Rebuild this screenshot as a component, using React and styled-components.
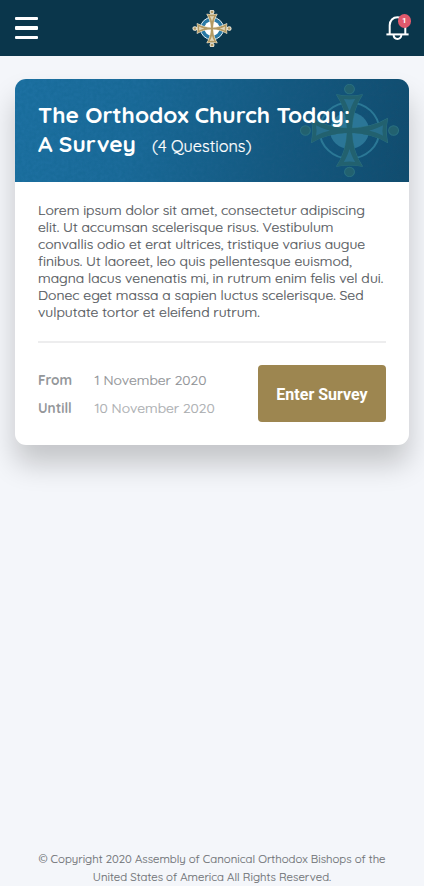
import React from "react";
import styled, { createGlobalStyle } from "styled-components";

const GlobalStyle = createGlobalStyle`
  * { box-sizing: border-box; }
  body {
    margin: 0;
    background: #f4f6fa;
    font-family: Quicksand, Lato, sans-serif;
  }
`;

const Page = styled.div`
  min-height: 886px;
  display: flex;
  flex-direction: column;
`;

const NavBar = styled.header`
  height: 56px;
  padding: 0 15px;
  background: #0a364b;
  display: grid;
  grid-template-columns: 1fr auto 1fr;
  align-items: center;
`;

const MenuButton = styled.button`
  width: 23px;
  padding: 0;
  border: 0;
  background: none;
  display: flex;
  flex-direction: column;
  gap: 6px;
`;

const MenuBar = styled.span`
  height: 3.6px;
  border-radius: 1px;
  background: #fff;
`;

const BellButton = styled.button`
  position: relative;
  justify-self: end;
  width: 23px;
  height: 24px;
  padding: 0;
  border: 0;
  background: none;
  svg { display: block; }
`;

const Badge = styled.span`
  position: absolute;
  top: -2px;
  right: -2px;
  width: 13.5px;
  height: 13.5px;
  border-radius: 50%;
  background: #e0596c;
  color: #fff;
  font: 700 8px/13px Roboto, sans-serif;
  text-align: center;
`;

const Card = styled.main`
  margin: 23px 15px 0;
  height: 366px;
  border-radius: 11px;
  background: #fff;
  box-shadow: 0 19px 29px rgba(0, 0, 0, 0.2);
`;

const CardHeader = styled.div`
  position: relative;
  height: 102.5px;
  padding: 22px 23px 0;
  border-radius: 11px 11px 0 0;
  background: linear-gradient(100deg, #1d71a2 0%, #1b6b9a 30%, #165a82 65%, #124c6e 100%);
  overflow: hidden;
`;

const Texture = styled.svg`
  position: absolute;
  inset: 0;
  width: 100%;
  height: 100%;
  opacity: 0.13;
`;

const Watermark = styled.div`
  position: absolute;
  top: 4.7px;
  right: 8.5px;
  svg { display: block; }
`;

const Title = styled.h1`
  position: relative;
  margin: 0;
  color: #fff;
  font-size: 22.7px;
  font-weight: 700;
  line-height: 28.6px;
  white-space: nowrap;
`;

const Count = styled.span`
  margin-left: 16px;
  font-size: 16.25px;
  font-weight: 400;
  line-height: 1;
  -webkit-text-stroke: 0.2px currentColor;
`;

const Line = styled.span`
  display: block;
  white-space: nowrap;
`;

const CardBody = styled.div`
  padding: 19.3px 23px 0;
`;

const Description = styled.p`
  margin: 0;
  height: 117.8px;
  color: #54585d;
  font-size: 13.9px;
  font-weight: 400;
  line-height: 17.1px;
  -webkit-text-stroke: 0.2px currentColor;
`;

const CardFooter = styled.div`
  margin-top: 22.2px;
  padding-top: 22.2px;
  border-top: 2px solid #ededee;
  display: flex;
  justify-content: space-between;
`;

const Dates = styled.dl`
  margin: 0;
  padding-top: 1px;
  display: grid;
  grid-template-columns: 56.5px auto;
  align-content: start;
  font-size: 13.83px;
  line-height: 28.5px;
`;

const DateLabel = styled.dt`
  color: #94979a;
  font-size: 13.6px;
  font-weight: 700;
`;

const DateValue = styled.dd`
  margin: 0;
  color: ${({ $faded }) => ($faded ? "#aaadb0" : "#8f9296")};
  -webkit-text-stroke: 0.2px currentColor;
`;

const EnterButton = styled.button`
  width: 128px;
  height: 57px;
  padding: 2px 0 0;
  border: 0;
  border-radius: 4px;
  background: #9d8650;
  color: #fff;
  font: 700 16px/55px Roboto, sans-serif;
`;

const Copyright = styled.footer`
  margin-top: auto;
  color: #707377;
  font-size: 11.4px;
  font-weight: 400;
  line-height: 18.2px;
  text-align: center;
  -webkit-text-stroke: 0.15px currentColor;
`;

const ARM =
  "M-2.2 0 C-2.6 -14 -6 -27 -12.5 -37 Q0 -34.5 12.5 -37 C6 -27 2.6 -14 2.2 0 Z";
const ARM_INSET = "M0 -19 C-1 -23 -3 -28 -5.5 -32.5 Q0 -31.5 5.5 -32.5 C3 -28 1 -23 0 -19 Z";
const ANGLES = [0, 90, 180, 270];

function Cross({ width, height, arm, outline, outlineWidth, ring, ringWidth, band, disc, inset }) {
  return (
    <svg width={width} height={height} viewBox="-50 -48 100 96" preserveAspectRatio="none">
      <circle r="29" fill={band} stroke={ring} strokeWidth={ringWidth} />
      <circle r="19" fill={disc} />
      {ANGLES.map((angle) => (
        <g key={angle} transform={`rotate(${angle})`} stroke={outline} strokeWidth={outlineWidth}>
          <circle cy="-42.8" r="4.8" fill={arm} />
          <path d={ARM} fill={arm} strokeLinejoin="round" />
        </g>
      ))}
      {ANGLES.map((angle) => (
        <g key={angle} transform={`rotate(${angle})`}>
          <path d={ARM} fill={arm} />
          <path d={ARM_INSET} fill={inset} />
        </g>
      ))}
    </svg>
  );
}

const description = [
  "Lorem ipsum dolor sit amet, consectetur adipiscing",
  "elit. Ut accumsan scelerisque risus. Vestibulum",
  "convallis odio et erat ultrices, tristique varius augue",
  "finibus. Ut laoreet, leo quis pellentesque euismod,",
  "magna lacus venenatis mi, in rutrum enim felis vel dui.",
  "Donec eget massa a sapien luctus scelerisque. Sed",
  "vulputate tortor et eleifend rutrum.",
];

export default function App() {
  return (
    <Page>
      <GlobalStyle />
      <NavBar>
        <MenuButton aria-label="Menu">
          <MenuBar />
          <MenuBar />
          <MenuBar />
        </MenuButton>
        <Cross
          width={40}
          height={37}
          arm="#b39a63"
          outline="#efe9d8"
          outlineWidth={2.6}
          ring="#e6eef2"
          ringWidth={2.5}
          band="#2a7aa6"
          disc="#ffffff"
          inset="#e2d6b8"
        />
        <BellButton aria-label="Notifications">
          <svg width="23" height="24" viewBox="0 0 23 24" fill="none" stroke="#fff" strokeWidth="2">
            <path d="M3.7 18 V9.3 C3.7 4.5 7 1.3 11.5 1.3 S19.3 4.5 19.3 9.3 V18" />
            <path d="M0.4 18.4 H22.6" />
            <path d="M7.6 18.6 C7.6 24.4 15.4 24.4 15.4 18.6" />
          </svg>
          <Badge>1</Badge>
        </BellButton>
      </NavBar>

      <Card>
        <CardHeader>
          <Texture aria-hidden="true">
            <filter id="grain">
              <feTurbulence type="fractalNoise" baseFrequency="0.28" numOctaves="2" seed="4" />
              <feColorMatrix values="0 0 0 0 0  0 0 0 0 0.1  0 0 0 0 0.2  2.4 0 0 0 -0.8" />
            </filter>
            <rect width="100%" height="100%" filter="url(#grain)" />
          </Texture>
          <Watermark>
            <Cross
              width={103}
              height={93}
              arm="#22616f"
              outline="#2a7080"
              outlineWidth={1}
              ring="#2b7896"
              ringWidth={2}
              band="none"
              disc="#2b7697"
              inset="#286f8c"
            />
          </Watermark>
          <Title>
            <Line>The Orthodox Church Today:</Line>
            <Line>
              A Survey
              <Count>(4 Questions)</Count>
            </Line>
          </Title>
        </CardHeader>
        <CardBody>
          <Description>
            {description.map((text) => (
              <Line key={text}>{text}</Line>
            ))}
          </Description>
          <CardFooter>
            <Dates>
              <DateLabel>From</DateLabel>
              <DateValue>1 November 2020</DateValue>
              <DateLabel>Untill</DateLabel>
              <DateValue $faded>10 November 2020</DateValue>
            </Dates>
            <EnterButton>Enter Survey</EnterButton>
          </CardFooter>
        </CardBody>
      </Card>

      <Copyright>
        <Line>© Copyright 2020 Assembly of Canonical Orthodox Bishops of the</Line>
        <Line>United States of America All Rights Reserved.</Line>
      </Copyright>
    </Page>
  );
}
